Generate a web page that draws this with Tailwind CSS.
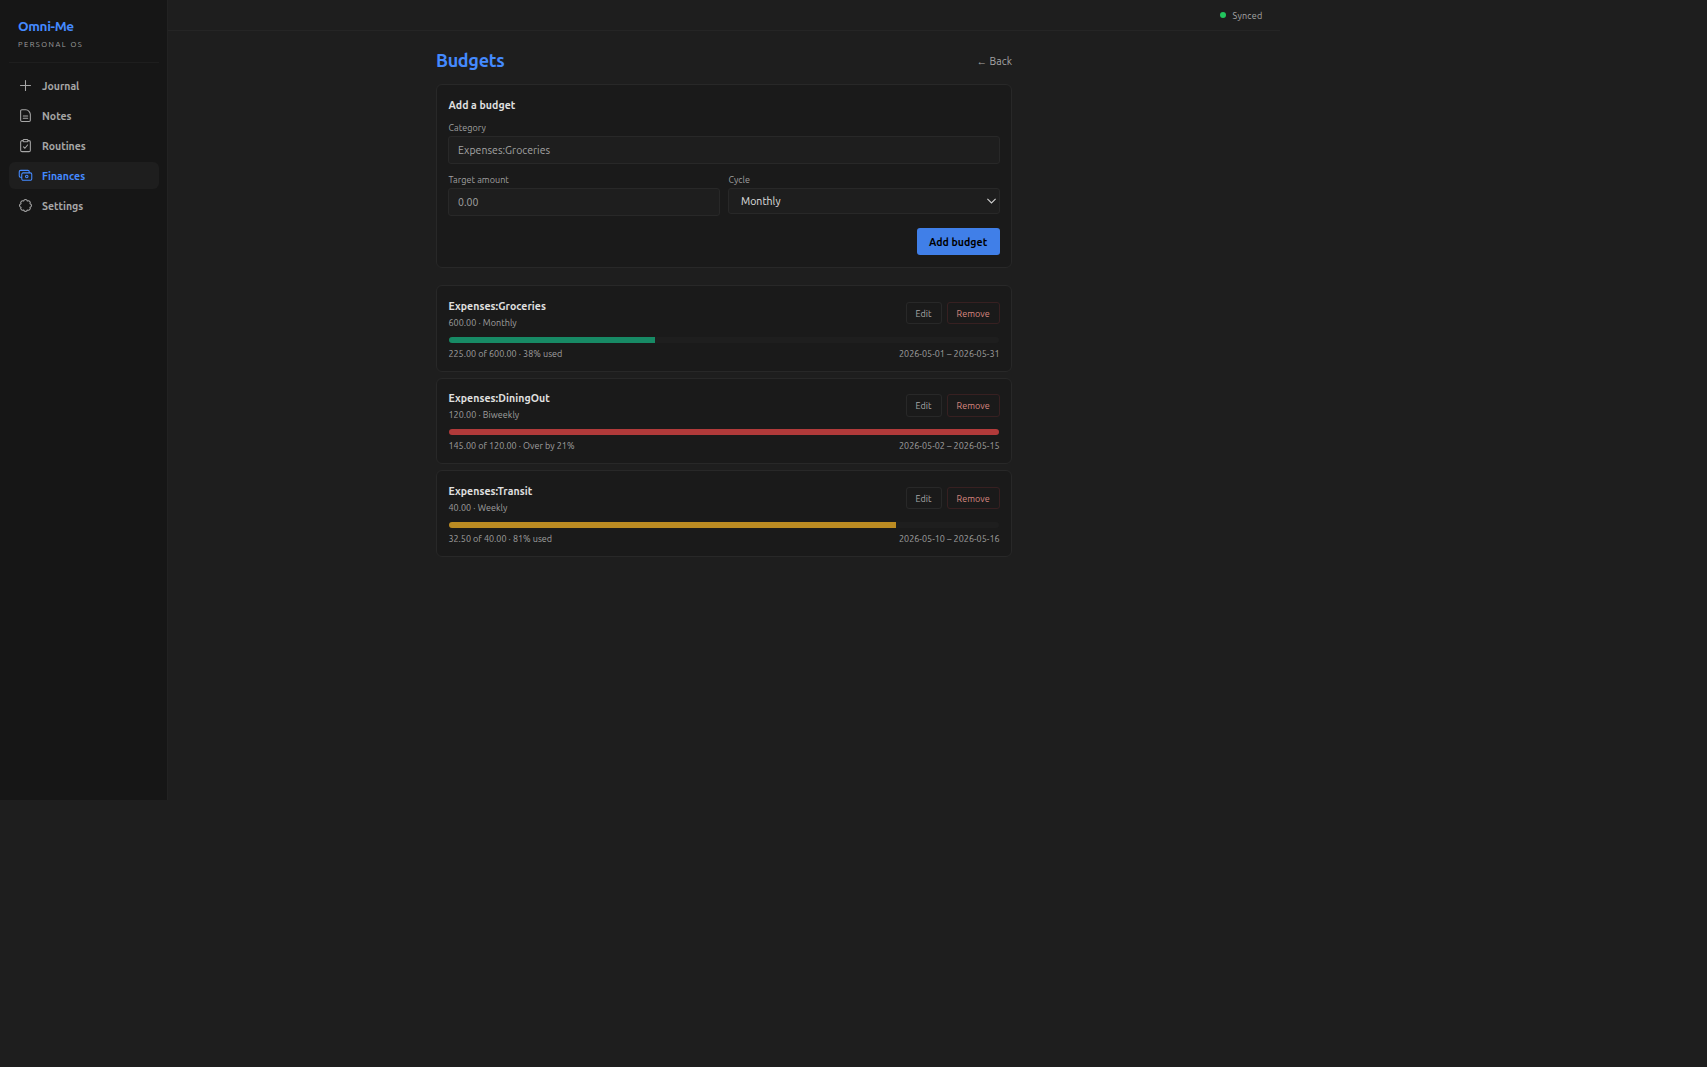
<!DOCTYPE html>
<html lang="en" class="text-[12px]">
<head>
  <meta charset="UTF-8" />
  <meta name="viewport" content="width=device-width, initial-scale=1.0" />
  <title>Omni-Me - Budgets</title>
  <script src="https://cdn.jsdelivr.net/npm/@tailwindcss/browser@4"></script>
</head>
<body class="bg-[#1e1e1e] min-h-screen text-[#e0e0e0] font-['Ubuntu','Noto_Sans',sans-serif] tracking-[0.05px]">
  <div class="flex w-[1280px] h-[800px]">
    <!-- Sidebar -->
    <aside class="w-56 shrink-0 bg-[#161616] border-r border-[#222222] pl-[9px] pr-[8px] pt-4">
      <div class="px-3 h-[51px] border-b border-[#1e1e1e]">
        <h1 class="text-[13.5px] leading-[21px] pt-[4px] font-bold tracking-tight text-[#448aff]">Omni-Me</h1>
        <p class="text-[7.5px] leading-[12px] mt-[1px] tracking-[0.2em] text-[#a0a0a0]">PERSONAL OS</p>
      </div>
      <nav class="mt-[9px] flex flex-col gap-1 text-sm font-semibold tracking-normal text-[#a6a6a6]">
        <a href="#" class="flex items-center gap-3 h-9 px-3 rounded-lg">
          <svg class="size-5" fill="none" viewBox="0 0 24 24" stroke="currentColor" stroke-width="1.7" stroke-linecap="round" stroke-linejoin="round">
            <path d="M12 4v16m8-8H4" />
          </svg>
          <span class="mt-[2px]">Journal</span>
        </a>
        <a href="#" class="flex items-center gap-3 h-9 px-3 rounded-lg">
          <svg class="size-5" fill="none" viewBox="0 0 24 24" stroke="currentColor" stroke-width="1.7" stroke-linecap="round" stroke-linejoin="round">
            <path d="M6.2 2.75h6.3c4 0 7.25 4.2 7.25 7.75v9a2 2 0 0 1-2 2H6.2a2 2 0 0 1-2-2V4.75a2 2 0 0 1 2-2ZM8.5 12.8h7M8.5 16.3h7" />
          </svg>
          <span class="mt-[2px]">Notes</span>
        </a>
        <a href="#" class="flex items-center gap-3 h-9 px-3 rounded-lg">
          <svg class="size-5" fill="none" viewBox="0 0 24 24" stroke="currentColor" stroke-width="1.7" stroke-linecap="round" stroke-linejoin="round">
            <path d="M8.9 14.3 11 16.4 15.3 11.2M8.25 4.2H6.5A2.25 2.25 0 0 0 4.25 6.45v13.05a2.25 2.25 0 0 0 2.25 2.25h11a2.25 2.25 0 0 0 2.25-2.25V6.45a2.25 2.25 0 0 0-2.25-2.25h-1.75M9.75 2.25h4.5a1.5 1.5 0 0 1 1.5 1.5v1.5a.75.75 0 0 1-.75.75H9a.75.75 0 0 1-.75-.75v-1.5a1.5 1.5 0 0 1 1.5-1.5Z" />
          </svg>
          <span class="mt-[2px]">Routines</span>
        </a>
        <a href="#" class="flex items-center gap-3 h-9 px-3 rounded-lg bg-[#1e1e1e] text-[#448aff]">
          <svg class="size-5" fill="none" viewBox="0 0 24 24" stroke="currentColor" stroke-width="1.7" stroke-linecap="round" stroke-linejoin="round">
            <path d="M18 7.5V6a2.25 2.25 0 0 0-2.25-2.25H4.25A2.25 2.25 0 0 0 2 6v6.5a2.25 2.25 0 0 0 2.25 2.25H6M8.25 7.75h11.5A2.25 2.25 0 0 1 22 10v7.25a2.25 2.25 0 0 1-2.25 2.25H8.25A2.25 2.25 0 0 1 6 17.25V10a2.25 2.25 0 0 1 2.25-2.25Z" />
            <circle cx="14" cy="13.6" r="2" />
          </svg>
          <span class="mt-[2px] tracking-[0.05px]">Finances</span>
        </a>
        <a href="#" class="flex items-center gap-3 h-9 px-3 rounded-lg">
          <svg class="size-5" fill="none" viewBox="0 0 24 24" stroke="currentColor" stroke-width="1.7" stroke-linecap="round" stroke-linejoin="round">
            <path d="M19.11 9.05A3 3 0 0 1 19.11 14.95 3 3 0 0 1 14.95 19.11 3 3 0 0 1 9.05 19.11 3 3 0 0 1 4.89 14.95 3 3 0 0 1 4.89 9.05 3 3 0 0 1 9.05 4.89 3 3 0 0 1 14.95 4.89 3 3 0 0 1 19.11 9.05Z" />
          </svg>
          <span class="mt-[2px]">Settings</span>
        </a>
      </nav>
    </aside>

    <div class="flex-1 min-w-0">
      <!-- Sync status -->
      <header class="h-[31px] border-b border-[#252525] flex items-center justify-end gap-[6.4px] pr-[17.6px]">
        <span class="size-[6px] rounded-full bg-[#22c55e]"></span>
        <span class="pt-[2px] text-xs tracking-wide text-[#a6a6a6]">Synced</span>
      </header>

      <main class="max-w-3xl mx-auto pt-[20px]">
        <div class="flex items-center justify-between h-6">
          <h2 class="text-2xl font-bold tracking-[-0.3px] text-[#448aff]">Budgets</h2>
          <a href="#" class="pt-[2px] text-sm text-[#a6a6a6]">← Back</a>
        </div>

        <!-- New budget form -->
        <form class="mt-[15px] bg-[#1a1a1a] border border-[#282828] rounded-lg pt-[13px] pb-4 px-[11.4px]">
          <h3 class="text-sm font-bold leading-[15px] tracking-[0.08px]">Add a budget</h3>
          <div class="mt-3 text-xs leading-[12px] text-[#a0a0a0]">Category</div>
          <div class="mt-[2px] h-[28px] flex items-center px-[8.6px] rounded bg-[#1e1e1e] border border-[#282828] text-sm text-[#a3a3a3]">Expenses:Groceries</div>
          <div class="mt-[10px] grid grid-cols-2 gap-[8.8px]">
            <div>
              <div class="text-xs leading-[12px] text-[#a0a0a0]">Target amount</div>
              <div class="mt-[2px] h-[28px] flex items-center px-[8.6px] rounded bg-[#1e1e1e] border border-[#282828] text-sm text-[#a3a3a3]">0.00</div>
            </div>
            <div>
              <div class="text-xs leading-[12px] text-[#a0a0a0]">Cycle</div>
              <div class="mt-[2px] h-[26px] flex items-center justify-between pl-[11.6px] pr-[3px] rounded bg-[#1e1e1e] border border-[#282828] text-sm">
                Monthly
                <svg class="w-[9px] h-[6px]" viewBox="0 0 9 6" fill="none" stroke="#d0d0d0" stroke-width="1.1"><path d="M.4 .9 4.5 5 8.6 .9" /></svg>
              </div>
            </div>
          </div>
          <div class="mt-4 flex justify-end">
            <button type="button" class="h-9 w-[83px] pt-[2px] rounded bg-[#407fe8] text-sm font-bold text-black">Add budget</button>
          </div>
        </form>

        <!-- Budget list -->
        <ul id="budgets" class="mt-[17px] flex flex-col gap-2"></ul>
      </main>
    </div>
  </div>

  <script>
    const budgets = [
      { name: "Expenses:Groceries", target: "600.00", spent: "225.00", cycle: "Monthly", note: "38% used", pct: 37.5, bar: "bg-[#178a65]", period: "2026-05-01 – 2026-05-31" },
      { name: "Expenses:DiningOut", target: "120.00", spent: "145.00", cycle: "Biweekly", note: "Over by 21%", pct: 100, bar: "bg-[#b13a3a]", period: "2026-05-02 – 2026-05-15" },
      { name: "Expenses:Transit", target: "40.00", spent: "32.50", cycle: "Weekly", note: "81% used", pct: 81.25, bar: "bg-[#bb8b22]", period: "2026-05-10 – 2026-05-16" },
    ];

    document.getElementById("budgets").innerHTML = budgets.map((b) => `
      <li class="h-[86.5px] bg-[#1a1a1a] border border-[#282828] rounded-lg py-4 px-[11.4px]">
        <div class="flex items-center justify-between h-10">
          <div class="pt-[1px]">
            <div class="text-sm leading-[15px] font-bold tracking-[0.08px]">${b.name}</div>
            <div class="mt-[3px] text-xs leading-[12px] text-[#a0a0a0]">${b.target} · ${b.cycle}</div>
          </div>
          <div class="flex gap-[5px] text-xs leading-[12px]">
            <button class="h-[22.5px] w-[36px] pt-[1px] rounded border border-[#282828] text-[#a8a8a8]">Edit</button>
            <button class="h-[22.5px] w-[53px] pt-[1px] rounded border border-[#372021] text-[#d98880]">Remove</button>
          </div>
        </div>
        <div class="mt-[8.9px] mx-[0.3px] h-[6px] rounded-full bg-[#1e1e1e] overflow-hidden">
          <div class="h-full ${b.bar}" style="width: ${b.pct}%"></div>
        </div>
        <div class="mt-[5.05px] flex justify-between text-xs leading-[12px] tracking-[0.02px] text-[#a0a0a0]">
          <span>${b.spent} of ${b.target} · ${b.note}</span>
          <span>${b.period}</span>
        </div>
      </li>
    `).join("");
  </script>
</body>
</html>
